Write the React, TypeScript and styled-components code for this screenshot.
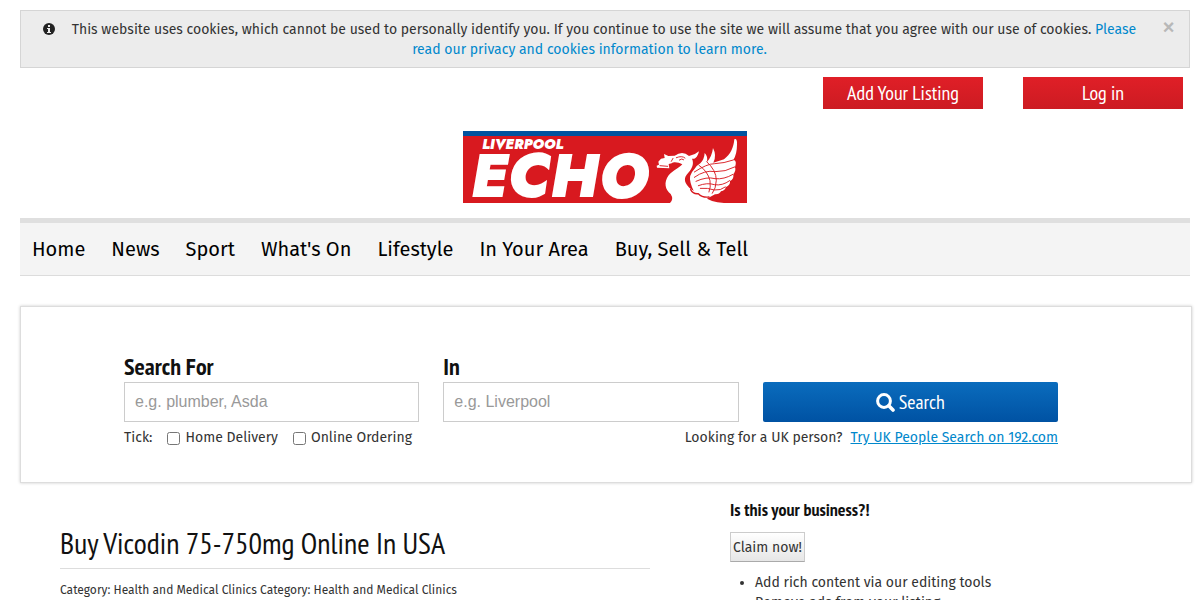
import React from "react";
import styled, { createGlobalStyle } from "styled-components";

const bodyFont = `"Fira Sans", "DejaVu Sans Condensed", "DejaVu Sans", sans-serif`;
const narrowFont = `"PT Sans Narrow", Roboto, sans-serif`;

const GlobalStyle = createGlobalStyle`
  *, *::before, *::after { box-sizing: border-box; }
  body {
    margin: 0;
    background: #fff;
    color: #333;
    font-family: ${bodyFont};
    font-size: 14px;
    line-height: 20px;
  }
`;

const Page = styled.div`
  padding: 10px 10px 0 20px;
`;

const CookieNotice = styled.div`
  display: flex;
  align-items: flex-start;
  padding: 9px 14px 7px;
  border: 1px solid #d5d5d5;
  background: #ececec;
`;

const CookieText = styled.p`
  flex: 1;
  margin: 0;
  padding-right: 10px;
  text-align: center;

  svg {
    width: 12px;
    height: 12px;
    margin-right: 17px;
    vertical-align: -1px;
  }
`;

const Link = styled.a<{ $underlined?: boolean }>`
  color: #0088cc;
  text-decoration: ${(p) => (p.$underlined ? "underline" : "none")};
`;

const CloseButton = styled.button`
  width: 21px;
  padding: 0 0 0 8px;
  border: 0;
  background: none;
  color: #b8b8b8;
  font: bold 20px/14px "Liberation Sans", sans-serif;
  cursor: pointer;
`;

const AccountBar = styled.div`
  display: flex;
  justify-content: flex-end;
  gap: 40px;
  padding: 9px 7px 0 0;
`;

const AccountButton = styled.button`
  width: 160px;
  height: 32px;
  padding: 0;
  border: 0;
  background: linear-gradient(#e01f27, #cc1b22);
  color: #fff;
  font: 20px/32px ${narrowFont};
  cursor: pointer;
`;

const Masthead = styled.header`
  display: flex;
  justify-content: center;
  padding: 22px 0 15px;

  a, svg { display: block; }
`;

const NavBar = styled.nav`
  display: flex;
  gap: 26px;
  padding: 12px 12px 11px;
  border-top: 5px solid #dfdfdf;
  border-bottom: 1px solid #dcdcdc;
  background: #f4f4f4;
`;

const NavLink = styled.a`
  color: #000;
  font-size: 20px;
  line-height: 29px;
  text-decoration: none;
`;

const SearchPanel = styled.form`
  margin: 30px -2px 0 0;
  padding: 44px 133px 34px 103px;
  border: 1px solid #ddd;
  box-shadow: 0 0 3px rgba(0, 0, 0, 0.2);
`;

const SearchFields = styled.div`
  display: grid;
  grid-template-columns: repeat(3, 1fr);
  align-items: end;
  gap: 24px;
`;

const Field = styled.div`
  display: flex;
  flex-direction: column;
`;

const FieldLabel = styled.label`
  color: #111;
  font: bold 24px/31px ${narrowFont};
`;

const TextInput = styled.input`
  width: 100%;
  height: 40px;
  padding: 0 10px;
  border: 1px solid #ccc;
  background: #fff;
  color: #555;
  font: 16px/20px "Liberation Sans", sans-serif;

  &::placeholder { color: #999; }
`;

const SearchButton = styled.button`
  display: flex;
  align-items: center;
  justify-content: center;
  gap: 4px;
  height: 40px;
  border: 0;
  border-radius: 2px;
  background: linear-gradient(#0a6cbd, #0052a3);
  color: #fff;
  font: 20px/24px ${narrowFont};
  cursor: pointer;

  svg { width: 19px; height: 19px; }
`;

const SearchOptions = styled.div`
  display: flex;
  justify-content: space-between;
  padding-top: 6px;
`;

const OptionGroup = styled.div`
  display: flex;
  gap: 15px;
`;

const TickOption = styled.label`
  display: flex;
  align-items: center;
  gap: 5px;
`;

const TickBox = styled.input`
  width: 13px;
  height: 13px;
  margin: 0;
`;

const PeopleSearch = styled.div`
  display: flex;
  gap: 8px;
`;

const Content = styled.main`
  display: grid;
  grid-template-columns: 59fr 46fr;
  gap: 80px;
  padding: 17px 0 0 40px;
`;

const Listing = styled.article`
  padding-top: 23px;
`;

const ListingTitle = styled.h1`
  margin: 0;
  padding-bottom: 5px;
  border-bottom: 1px solid #ddd;
  color: #111;
  font: 30px/40px ${narrowFont};
`;

const Categories = styled.p`
  margin: 11px 0 0;
  font-size: 12px;
`;

const Sidebar = styled.aside``;

const SidebarTitle = styled.h2`
  margin: 0 0 12px;
  color: #111;
  font: bold 18px/20px ${narrowFont};
`;

const ClaimButton = styled.button`
  height: 30px;
  padding: 1px 2px 0;
  border: 1px solid #ccc;
  border-bottom-color: #aaa;
  background: linear-gradient(#fff, #e6e6e6);
  color: #333;
  font: 14px/20px ${bodyFont};
  cursor: pointer;
`;

const Benefits = styled.ul`
  margin: 11px 0 0;
  padding: 0 0 0 25px;
`;

const navItems = ["Home", "News", "Sport", "What's On", "Lifestyle", "In Your Area", "Buy, Sell & Tell"];
const tickOptions = ["Home Delivery", "Online Ordering"];
const benefits = ["Add rich content via our editing tools", "Remove ads from your listing"];

function InfoIcon() {
  return (
    <svg viewBox="0 0 12 12" aria-hidden>
      <circle cx="6" cy="6" r="6" fill="#222" />
      <path fill="#ececec" d="M5 2H7V4H5ZM4 5H7V9H8V10H4V9H5V6H4Z" />
    </svg>
  );
}

function SearchIcon() {
  return (
    <svg viewBox="0 0 19 19" fill="none" stroke="#fff" aria-hidden>
      <circle cx="8" cy="8" r="6.4" strokeWidth="3" />
      <path d="M12.8 12.8L17 17" strokeWidth="3.6" strokeLinecap="round" />
    </svg>
  );
}

function EchoLogo() {
  return (
    <svg width="284" height="72" viewBox="0 0 284 72" role="img" aria-label="Liverpool Echo">
      <rect width="284" height="72" fill="#d8191f" />
      <rect width="284" height="5" fill="#00539f" />
      <g fill="#fff" fontFamily="Jost, Lato, sans-serif" fontWeight="900" fontStyle="italic">
        <text x="19" y="18" fontSize="14">LIVERPOOL</text>
        <text x="7" y="66" fontSize="61">ECHO</text>
      </g>
      <g transform="translate(187 -3) scale(0.3333)" strokeLinecap="round" strokeLinejoin="round">
        {/* wing feathers */}
        <path fill="#fff" d="M122 165Q114 142 134 122Q141 112 151 106Q163 94 164 75Q174 84 171 102Q186 85 189 60Q201 83 190 104L222 94C242 80 251 58 253 34Q262 30 261 50Q261 78 250 96Q262 97 255 118Q259 126 250 140Q252 153 240 159Q242 171 227 178Q226 187 213 190Q208 200 195 199L165 215Q135 211 122 165Z" />
        {/* head, neck and breast */}
        <path fill="#fff" d="M147 70C141 93 133 93 126 92C134 109 124 125 110 140C99 155 107 168 118 179C132 194 151 189 165 207Q179 222 222 225H60Q72 214 62 198C46 186 40 164 56 142C69 127 88 120 97 109C87 104 72 100 65 106L56 108L58 121L21 119L20 113L27 110L25 101L33 92L44 90L42 78L55 84L74 83Q98 67 117 84Q135 81 147 70Z" />
        {/* line work over the white shapes */}
        <g fill="none" stroke="#d8191f" strokeWidth="2.8">
          <path d="M79 89Q96 82 105 90M88 96Q96 90 101 95M69 91L64 100M30 113L53 115" />
          <path d="M147 112Q173 129 180 158Q183 178 177 192M170 101Q199 127 199 157Q198 182 187 196" />
          <path d="M133 132Q171 107 194 107Q222 106 250 96" />
          <path d="M133 148Q165 125 195 131Q226 132 254 117M138 160Q170 145 195 152Q222 155 249 139" />
          <path d="M145 173Q172 163 193 170Q217 174 239 158M151 181Q173 179 193 186Q212 188 226 177" />
          <path d="M122 185Q129 199 145 197Q158 210 177 207" strokeWidth="4" />
        </g>
      </g>
    </svg>
  );
}

export default function App() {
  return (
    <>
      <GlobalStyle />
      <Page>
        <CookieNotice>
          <CookieText>
            <InfoIcon />
            This website uses cookies, which cannot be used to personally identify you. If you continue to use the site
            we will assume that you agree with our use of cookies.{" "}
            <Link href="#privacy">Please read our privacy and cookies information to learn more.</Link>
          </CookieText>
          <CloseButton type="button" aria-label="Close">×</CloseButton>
        </CookieNotice>

        <AccountBar>
          <AccountButton type="button">Add Your Listing</AccountButton>
          <AccountButton type="button">Log in</AccountButton>
        </AccountBar>

        <Masthead>
          <a href="#home"><EchoLogo /></a>
        </Masthead>

        <NavBar>
          {navItems.map((item) => (
            <NavLink key={item} href="#nav">{item}</NavLink>
          ))}
        </NavBar>

        <SearchPanel>
          <SearchFields>
            <Field>
              <FieldLabel htmlFor="what">Search For</FieldLabel>
              <TextInput id="what" type="text" placeholder="e.g. plumber, Asda" />
            </Field>
            <Field>
              <FieldLabel htmlFor="where">In</FieldLabel>
              <TextInput id="where" type="text" placeholder="e.g. Liverpool" />
            </Field>
            <SearchButton type="button">
              <SearchIcon />
              Search
            </SearchButton>
          </SearchFields>
          <SearchOptions>
            <OptionGroup>
              <span>Tick:</span>
              {tickOptions.map((option) => (
                <TickOption key={option}>
                  <TickBox type="checkbox" />
                  {option}
                </TickOption>
              ))}
            </OptionGroup>
            <PeopleSearch>
              <span>Looking for a UK person?</span>
              <Link href="#people" $underlined>Try UK People Search on 192.com</Link>
            </PeopleSearch>
          </SearchOptions>
        </SearchPanel>

        <Content>
          <Listing>
            <ListingTitle>Buy Vicodin 75-750mg Online In USA</ListingTitle>
            <Categories>
              Category: Health and Medical Clinics Category: Health and Medical Clinics
            </Categories>
          </Listing>
          <Sidebar>
            <SidebarTitle>Is this your business?!</SidebarTitle>
            <ClaimButton type="button">Claim now!</ClaimButton>
            <Benefits>
              {benefits.map((benefit) => (
                <li key={benefit}>{benefit}</li>
              ))}
            </Benefits>
          </Sidebar>
        </Content>
      </Page>
    </>
  );
}
